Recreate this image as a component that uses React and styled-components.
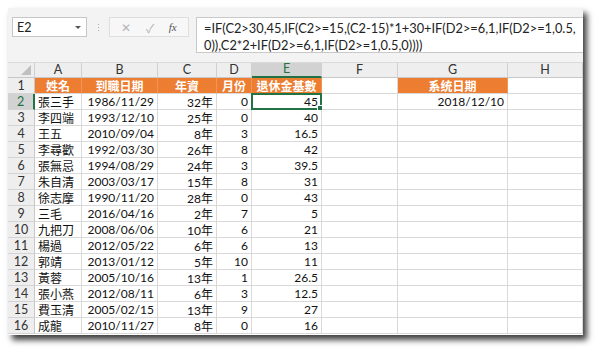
import React from 'react';
import styled, { createGlobalStyle } from 'styled-components';

const GlobalStyle = createGlobalStyle`
  html, body {
    margin: 0;
    padding: 0;
    background: #ffffff;
  }
  body {
    font-family: Lato, 'Noto Sans CJK TC', sans-serif;
  }
`;

const FONT = `Lato, 'Noto Sans CJK TC', sans-serif`;
const COLS = [27, 47, 76, 59, 35, 70, 76, 110, 75];
const GREEN = '#217346';
const ORANGE = '#ed7d31';

const Page = styled.div`
  width: 600px;
  height: 347px;
  padding: 8px 0 0 8px;
  box-sizing: border-box;
`;

const Frame = styled.div`
  width: 575px;
  height: 327px;
  background: #f3f3f3;
  box-shadow: 4px 5px 6px rgba(0, 0, 0, 0.75);
  display: flex;
  flex-direction: column;
  overflow: hidden;
`;

const TopBar = styled.div`
  height: 55px;
  display: flex;
  align-items: flex-start;
  padding: 9px 0 0 4px;
  box-sizing: border-box;
  border-bottom: 1px solid #dadada;
`;

const NameBox = styled.div`
  width: 75px;
  height: 20px;
  box-sizing: border-box;
  background: #fff;
  border: 1px solid #c6c6c6;
  display: flex;
  align-items: center;
  justify-content: space-between;
  padding: 0 5px 0 4px;
  font-family: ${FONT};
  font-size: 12.5px;
  color: #222;
`;

const Caret = styled.span`
  width: 0;
  height: 0;
  border-left: 3px solid transparent;
  border-right: 3px solid transparent;
  border-top: 3px solid #555;
`;

const Dots = styled.div`
  width: 22px;
  height: 20px;
  display: flex;
  flex-direction: column;
  align-items: center;
  justify-content: center;
  gap: 2px;
  span {
    width: 1px;
    height: 1px;
    background: #aaa;
  }
`;

const FxBox = styled.div`
  width: 80px;
  height: 20px;
  box-sizing: border-box;
  border: 1px solid #dedede;
  background: #f7f7f7;
  display: flex;
  align-items: center;
  justify-content: space-around;
  padding: 0 4px;
  color: #b5b5b5;
  font-size: 12px;
`;

const FxText = styled.span`
  font-family: 'Liberation Serif', serif;
  font-style: italic;
  color: #555;
  font-size: 11px;
`;

const FormulaBox = styled.div`
  flex: 1;
  margin-left: 7px;
  height: 36px;
  box-sizing: border-box;
  background: #fff;
  border: 1px solid #c9c9c9;
  border-right: none;
  padding: 2px 0 0 7px;
  font-family: ${FONT};
  font-size: 12.8px;
  line-height: 17px;
  color: #222;
  white-space: nowrap;
  overflow: hidden;
`;

const Grid = styled.div`
  display: grid;
  grid-template-columns: ${COLS.map((c) => `${c}px`).join(' ')};
  grid-template-rows: 15px repeat(16, 16px);
  background: #fff;
  flex: 1;
`;

const ColHead = styled.div`
  background: ${(p) => (p.$active ? '#d2d2d2' : '#eeeeee')};
  color: ${(p) => (p.$active ? GREEN : '#333')};
  border-right: 1px solid #d0d0d0;
  border-bottom: ${(p) => (p.$active ? `2px solid ${GREEN}` : '1px solid #c8c8c8')};
  box-sizing: border-box;
  display: flex;
  align-items: center;
  justify-content: center;
  font-family: ${FONT};
  font-size: 12.5px;
  line-height: 1;
  position: relative;
`;

const Corner = styled(ColHead)`
  &::after {
    content: '';
    position: absolute;
    right: 3px;
    bottom: 2px;
    width: 0;
    height: 0;
    border-left: 10px solid transparent;
    border-bottom: 10px solid #c0c0c0;
  }
`;

const RowHead = styled.div`
  background: ${(p) => (p.$active ? '#d2d2d2' : '#eeeeee')};
  color: ${(p) => (p.$active ? GREEN : '#333')};
  border-right: ${(p) => (p.$active ? `2px solid ${GREEN}` : '1px solid #c8c8c8')};
  border-bottom: 1px solid #d4d4d4;
  box-sizing: border-box;
  display: flex;
  align-items: center;
  justify-content: center;
  font-family: ${FONT};
  font-size: 12.5px;
`;

const Cell = styled.div`
  position: relative;
  box-sizing: border-box;
  border-right: 1px solid ${(p) => (p.$fill ? '#f0955a' : '#d9d9d9')};
  border-bottom: 1px solid #d9d9d9;
  background: ${(p) => (p.$fill ? ORANGE : '#fff')};
  color: ${(p) => (p.$fill ? '#fff' : '#111')};
  font-weight: ${(p) => (p.$fill ? 700 : 400)};
  font-family: ${FONT};
  font-size: 12px;
  display: flex;
  align-items: center;
  justify-content: ${(p) =>
    p.$align === 'left' ? 'flex-start' : p.$align === 'center' ? 'center' : 'flex-end'};
  padding: 0 3px;
  white-space: nowrap;
  overflow: visible;
`;

const Selection = styled.div`
  position: absolute;
  left: -1px;
  top: -1px;
  right: -1px;
  bottom: -1px;
  border: 2px solid ${GREEN};
  pointer-events: none;
  &::after {
    content: '';
    position: absolute;
    right: -4px;
    bottom: -4px;
    width: 5px;
    height: 5px;
    background: ${GREEN};
    border: 1px solid #fff;
  }
`;

const letters = ['A', 'B', 'C', 'D', 'E', 'F', 'G', 'H'];
const aligns = ['left', 'right', 'right', 'right', 'right', 'right', 'right', 'right'];

const header = ['姓名', '到職日期', '年資', '月份', '退休金基數', '', '系统日期', ''];

const rows = [
  ['張三手', '1986/11/29', '32年', '0', '45', '', '2018/12/10', ''],
  ['李四端', '1993/12/10', '25年', '0', '40'],
  ['王五', '2010/09/04', '8年', '3', '16.5'],
  ['李尋歡', '1992/03/30', '26年', '8', '42'],
  ['張無忌', '1994/08/29', '24年', '3', '39.5'],
  ['朱自清', '2003/03/17', '15年', '8', '31'],
  ['徐志摩', '1990/11/20', '28年', '0', '43'],
  ['三毛', '2016/04/16', '2年', '7', '5'],
  ['九把刀', '2008/06/06', '10年', '6', '21'],
  ['楊過', '2012/05/22', '6年', '6', '13'],
  ['郭靖', '2013/01/12', '5年', '10', '11'],
  ['黃蓉', '2005/10/16', '13年', '1', '26.5'],
  ['張小燕', '2012/08/11', '6年', '3', '12.5'],
  ['費玉清', '2005/02/15', '13年', '9', '27'],
  ['成龍', '2010/11/27', '8年', '0', '16'],
];

function App() {
  return (
    <Page>
      <GlobalStyle />
      <Frame>
        <TopBar>
          <NameBox>
            E2
            <Caret />
          </NameBox>
          <Dots>
            <span />
            <span />
            <span />
          </Dots>
          <FxBox>
            <span>✕</span>
            <span>✓</span>
            <FxText>fx</FxText>
          </FxBox>
          <FormulaBox>
            =IF(C2&gt;30,45,IF(C2&gt;=15,(C2-15)*1+30+IF(D2&gt;=6,1,IF(D2&gt;=1,0.5,
            <br />
            0)),C2*2+IF(D2&gt;=6,1,IF(D2&gt;=1,0.5,0))))
          </FormulaBox>
        </TopBar>
        <Grid>
          <Corner />
          {letters.map((l) => (
            <ColHead key={l} $active={l === 'E'}>
              {l}
            </ColHead>
          ))}

          <RowHead>1</RowHead>
          {header.map((h, i) => (
            <Cell key={i} $fill={h !== ''} $align="center">
              {h}
            </Cell>
          ))}

          {rows.map((r, ri) => (
            <React.Fragment key={ri}>
              <RowHead $active={ri === 0}>{ri + 2}</RowHead>
              {letters.map((l, ci) => (
                <Cell key={l} $align={aligns[ci]}>
                  {r[ci] || ''}
                  {ri === 0 && ci === 4 && <Selection />}
                </Cell>
              ))}
            </React.Fragment>
          ))}
        </Grid>
      </Frame>
    </Page>
  );
}

export default App;
